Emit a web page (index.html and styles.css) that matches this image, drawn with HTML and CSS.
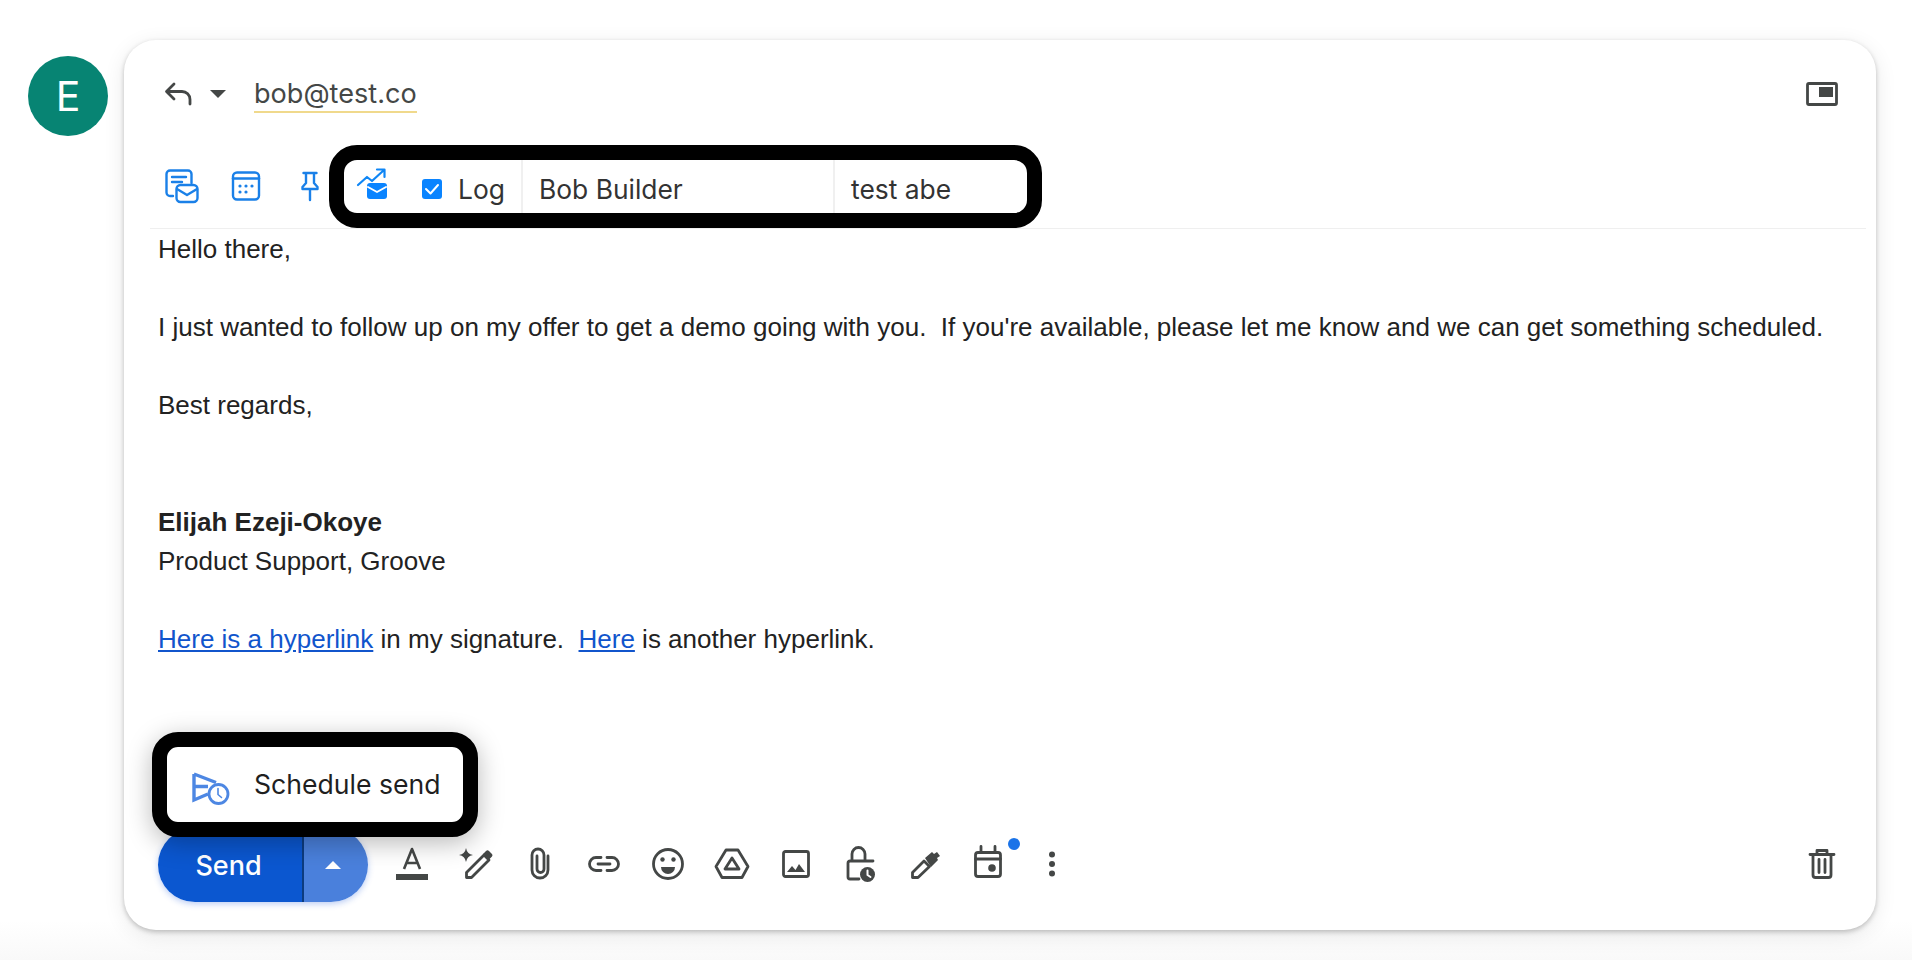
FILE: index.html
```html
<!DOCTYPE html>
<html lang="en">
<head>
<meta charset="utf-8">
<title>Compose reply</title>
<link rel="stylesheet" href="styles.css">
</head>
<body>
<div class="page">
  <div class="avatar">E</div>
  <main class="card">
    <header class="head-row">
      <svg class="icon" viewBox="0 0 40 40"><path class="st" d="M14 10 6.500 17.500 14 25M7 17.500h15a8 8 0 0 1 8 8V30"/></svg>
      <svg class="caret" viewBox="0 0 16 8"><path class="fill" d="M0 0h16L8 8z"/></svg>
      <span class="recipient">bob@test.co</span>
      <svg class="icon pip" viewBox="0 0 40 40"><rect class="st" x="5.500" y="9.500" width="29" height="21" rx="1.500"/><rect class="fill" x="17" y="13" width="14" height="10"/></svg>
    </header>

    <div class="tool-row">
      <div class="blue-icons">
        <svg class="icon" viewBox="0 0 40 40"><path class="st-b" d="M11 30H8a3.500 3.500 0 0 1-3.500-3.500V8A3.500 3.500 0 0 1 8 4.500h18A3.500 3.500 0 0 1 29.500 8v9M10 11h14M10 16h10"/><rect class="st-b" x="14.500" y="19" width="21" height="17" rx="4"/><path class="st-b" d="m15 23 10 6 10-6"/></svg>
        <svg class="icon" viewBox="0 0 40 40"><rect class="st-b" x="7" y="6.500" width="26" height="27" rx="4"/><path class="st-b" d="M7 12.500h26"/><circle class="fill-b" cx="14" cy="20" r="1.600"/><circle class="fill-b" cx="20" cy="20" r="1.600"/><circle class="fill-b" cx="26" cy="20" r="1.600"/><circle class="fill-b" cx="14" cy="26" r="1.600"/><circle class="fill-b" cx="20" cy="26" r="1.600"/></svg>
        <svg class="icon" viewBox="0 0 40 40"><path class="st-b" d="M13.500 7h13M16 7v10l-3.500 4v2h15v-2L24 17V7M20 23v11"/></svg>
      </div>
      <div class="log-bar">
        <div class="log-cell log-main">
          <svg class="icon" viewBox="0 0 40 40"><path class="st-c" d="m6 19 9-8 5 4 12-11M25 3.500h7.500V11"/><rect class="fill-c" x="15" y="17" width="20" height="16" rx="3"/><path class="chev" d="m16 21 9 5 9-5"/></svg>
          <svg class="check" viewBox="0 0 20 20"><rect class="fill-c" width="20" height="20" rx="3"/><path class="chev" d="m4 10 4.500 4.500L16 6"/></svg>
          <span class="log-label">Log</span>
        </div>
        <div class="log-cell log-name">Bob Builder</div>
        <div class="log-cell log-opp">test abe</div>
      </div>
    </div>

    <section class="body-text">
      <p>Hello there,</p>
      <p class="gap">I just wanted to follow up on my offer to get a demo going with you.&nbsp; If you're available, please let me know and we can get something scheduled.</p>
      <p class="gap">Best regards,</p>
      <p class="gap2"><strong>Elijah Ezeji-Okoye</strong></p>
      <p>Product Support, Groove</p>
      <p class="gap"><a href="#">Here is a hyperlink</a> in my signature.&nbsp; <a href="#">Here</a> is another hyperlink.</p>
    </section>

    <div class="schedule-pop">
      <svg class="sched-icon" viewBox="0 0 38 34"><path class="st-s" d="M2 3v26l14-6M2 3l22 8.500M2 15.500h14"/><circle class="st-s2" cx="26.500" cy="23" r="9.500"/><path class="st-t" d="M26 17.500v6l3.500 3"/></svg>
      <span>Schedule send</span>
    </div>

    <footer class="foot-row">
      <div class="send-btn">
        <span class="send-main">Send</span>
        <span class="send-more"><svg class="send-caret" viewBox="0 0 16 8"><path d="M0 8h16L8 0z"/></svg></span>
      </div>
      <svg class="icon" viewBox="0 0 40 40"><path class="st-t2" d="M12 25 20 5l8 20M14.500 19h11"/><rect class="fill" x="4" y="30" width="32" height="6"/></svg>
      <svg class="icon" viewBox="0 0 40 40"><path class="fill" d="M10 4q1 6 7 7-6 1-7 7-1-6-7-7 6-1 7-7z"/><path class="st" d="M10.500 33.500v-5L28 11l5 5-17.500 17.500z"/><path class="fill" d="m27 10 3-3a2 2 0 0 1 3 0l3 3a2 2 0 0 1 0 2.500l-3 3z"/></svg>
      <svg class="icon" viewBox="0 0 40 40"><path class="st" d="M28 12v14a8 8 0 0 1-16 0V11a6 6 0 0 1 12 0v14a3.500 3.500 0 0 1-7 0V12"/></svg>
      <svg class="icon" viewBox="0 0 40 40"><path class="st" d="M17 13.500h-5a6.500 6.500 0 0 0 0 13h5M23 13.500h5a6.500 6.500 0 0 1 0 13h-5M14 20h12"/></svg>
      <svg class="icon" viewBox="0 0 40 40"><circle class="st" cx="20" cy="20" r="14.500"/><circle class="fill" cx="14.500" cy="15.500" r="2.200"/><circle class="fill" cx="25.500" cy="15.500" r="2.200"/><path class="fill" d="M13 23h14a7 7 0 0 1-14 0z"/></svg>
      <svg class="icon" viewBox="0 0 40 40"><path class="st" d="M14 6h12l10 16.500-6 11H10l-6-11zM20 14l7 11H13z"/></svg>
      <svg class="icon" viewBox="0 0 40 40"><rect class="st" x="7.500" y="7.500" width="25" height="25" rx="2"/><path class="fill" d="m11 28 5-6 3.500 4 3.500-6 6 8z"/></svg>
      <svg class="icon" viewBox="0 0 40 40"><path class="st" d="M12 17v-7a6.500 6.500 0 0 1 13 0v7M33 17H10a2 2 0 0 0-2 2v14a2 2 0 0 0 2 2h9"/><circle class="fill" cx="27.500" cy="30.500" r="7.500"/><path class="st-w" d="M27.500 26.500v4.500l3 2"/></svg>
      <svg class="icon" viewBox="0 0 40 40"><path class="st" d="M8.500 33.500v-5L20 17l5.500 5.500L14 33.500z"/><path class="fill" d="m21 14 7-6 2 2 3-2 3 4-3 2 1 2-7 7z"/></svg>
      <span class="cal-wrap">
        <svg class="icon" viewBox="0 0 40 40"><rect class="st" x="7.500" y="8.500" width="25" height="24" rx="2.500"/><path class="st" d="M7.500 15h25M13 2.500V8M27 2.500V8"/><circle class="fill" cx="24" cy="24" r="3.800"/></svg>
        <span class="badge"></span>
      </span>
      <svg class="icon" viewBox="0 0 40 40"><circle class="fill" cx="20" cy="10.500" r="3"/><circle class="fill" cx="20" cy="20" r="3"/><circle class="fill" cx="20" cy="29.500" r="3"/></svg>
      <svg class="icon trash" viewBox="0 0 40 40"><path class="st" d="M8 10.500h24M15 9V6.500h10V9M11 11v20a2.500 2.500 0 0 0 2.500 2.500h13A2.500 2.500 0 0 0 29 31V11M17 15.500v13M23 15.500v13"/></svg>
    </footer>
  </main>
</div>
</body>
</html>
```
FILE: styles.css
```css
* { box-sizing: border-box; }
html, body { margin: 0; height: 100%; }
body {
  background: linear-gradient(#fff 0, #fff 920px, #f9f9f9 960px);
  font-family: "Liberation Sans", Arial, sans-serif;
  overflow: hidden;
}

.page {
  display: flex;
  align-items: flex-start;
  gap: 16px;
  padding: 40px 36px 30px 28px;
  height: 960px;
}

.avatar {
  flex: none;
  width: 80px;
  height: 80px;
  margin-top: 16px;
  border-radius: 50%;
  background: #078473;
  color: #fff;
  font: 400 41px/80px Inter, sans-serif;
  text-align: center;
}

.card {
  position: relative;
  flex: 1;
  height: 890px;
  display: flex;
  flex-direction: column;
  padding: 0 0 0 26px;
  background: #fff;
  border-radius: 32px;
  box-shadow: 0 2px 5px rgba(0,0,0,.22), 0 5px 22px rgba(0,0,0,.09);
}

.icon { flex: none; display: block; width: 40px; height: 40px; }
.st, .st-b, .st-c, .st-s, .st-s2, .st-t, .st-t2, .st-w, .chev { fill: none; stroke-linecap: round; stroke-linejoin: round; }
.st { stroke: #444746; stroke-width: 2.8; }
.st-t2 { stroke: #444746; stroke-width: 2.6; stroke-linecap: butt; }
.st-w { stroke: #fff; stroke-width: 2; }
.st-b { stroke: #1a80e8; stroke-width: 2.4; }
.st-c { stroke: #0f86f5; stroke-width: 2.2; }
.st-s { stroke: #4d87e3; stroke-width: 3.4; stroke-linecap: butt; stroke-linejoin: miter; }
.st-s2 { stroke: #4d87e3; stroke-width: 2.8; fill: #fff; }
.st-t { stroke: #4d87e3; stroke-width: 1.6; }
.chev { stroke: #fff; stroke-width: 2; }
.fill { fill: #444746; }
.fill-b { fill: #1a80e8; }
.fill-c { fill: #0a84ff; }

.head-row {
  flex: none;
  height: 105px;
  display: flex;
  align-items: center;
  padding: 3px 34px 0 10px;
}
.caret { width: 16px; height: 8px; margin-left: 10px; }
.recipient {
  margin-left: 28px;
  padding: 1px 0 1px;
  border-bottom: 2px solid #f0d98c;
  color: #444746;
  font: 400 27.100px/33px Inter, sans-serif;
}
.pip { margin-left: auto; }

.tool-row {
  flex: none;
  height: 84px;
  display: flex;
  align-items: center;
  margin-right: 10px;
  border-bottom: 1px solid #efefef;
}
.blue-icons { display: flex; gap: 24px; width: 179px; padding: 0 0 2px 12px; }
.log-bar {
  width: 713px;
  height: 83px;
  display: flex;
  align-self: flex-start;
  background: #fff;
  border: 15px solid #000;
  border-radius: 28px;
  color: #333;
  font: 400 26.400px/58px Inter, sans-serif;
}
.log-cell { height: 53px; border-right: 2px solid #f0f0f0; white-space: nowrap; }
.log-main { display: flex; align-items: center; width: 179px; padding-left: 8px; }
.log-main .icon { margin-top: -2px; }
.log-label { margin-top: 5px; }
.check { width: 20px; height: 20px; margin: 5px 16px 0 30px; }
.log-name { width: 312px; padding-left: 16px; }
.log-opp { flex: 1; padding-left: 16px; border-right: 0; }

.body-text {
  flex: 1;
  padding: 1px 0 0 8px;
  color: #222;
  font-size: 26px;
  line-height: 39px;
}
.body-text p { margin: 0; white-space: nowrap; }
.body-text .gap { margin-top: 39px; }
.body-text .gap2 { margin-top: 78px; }
.body-text a { color: #1155cc; }

.schedule-pop {
  position: absolute;
  left: 28px;
  bottom: 93px;
  z-index: 2;
  width: 326px;
  height: 105px;
  display: flex;
  align-items: center;
  gap: 24px;
  padding-left: 25px;
  background: #fff;
  border: 15px solid #000;
  border-radius: 26px;
  box-shadow: 0 6px 26px rgba(0,0,0,.28);
  color: #1f1f1f;
  font: 400 26.600px/1 Inter, sans-serif;
}
.sched-icon { flex: none; width: 38px; height: 34px; margin-top: 6px; }

.foot-row {
  flex: none;
  display: flex;
  align-items: center;
  gap: 24px;
  height: 74px;
  margin-bottom: 28px;
  padding: 0 34px 0 8px;
}
.foot-row .icon, .cal-wrap { margin-bottom: 2px; }
.cal-wrap .icon { margin-bottom: 0; }
.send-btn {
  flex: none;
  display: flex;
  width: 210px;
  height: 74px;
  border-radius: 37px;
  overflow: hidden;
  box-shadow: 0 2px 6px rgba(30,90,220,.3);
  color: #fff;
}
.send-main {
  width: 146px;
  padding-right: 3px;
  background: #0b57d0;
  border-right: 2px solid #0c3c80;
  font: 500 27px/76px Inter, sans-serif;
  text-align: center;
}
.send-more {
  flex: 1;
  display: flex;
  align-items: center;
  justify-content: center;
  padding-right: 6px;
  background: #4a80dc;
}
.send-caret { width: 16px; height: 8px; fill: #fff; }
.cal-wrap { position: relative; flex: none; width: 40px; height: 40px; }
.badge {
  position: absolute;
  left: 40px;
  top: -6px;
  width: 12px;
  height: 12px;
  border-radius: 50%;
  background: #1a73e8;
}
.trash { margin-left: auto; }
```
